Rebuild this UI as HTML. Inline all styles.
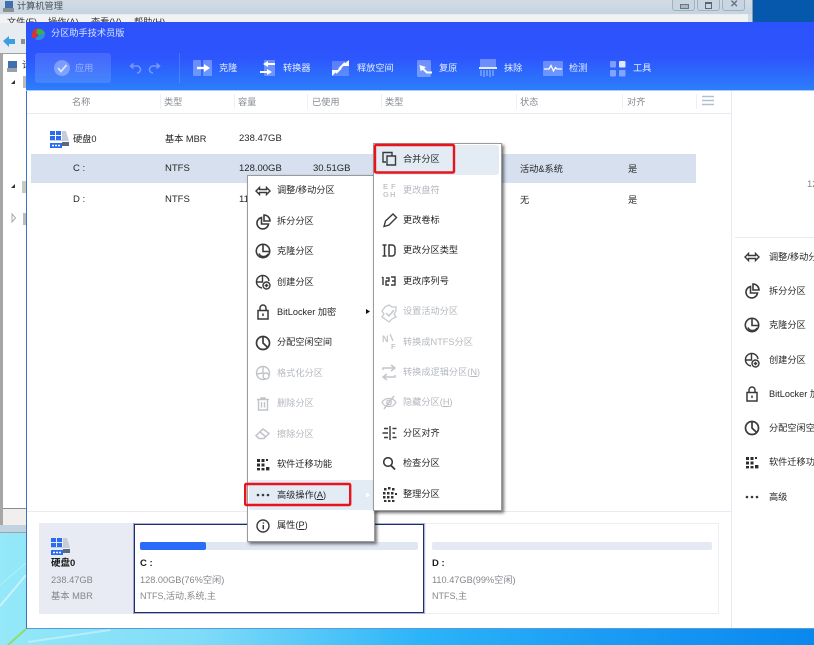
<!DOCTYPE html>
<html lang="zh">
<head>
<meta charset="utf-8">
<style>
html,body{margin:0;padding:0}
body{width:814px;height:645px;overflow:hidden;position:relative;background:#0558ac;font-family:"Liberation Sans","Noto Sans CJK SC",sans-serif;font-size:9.2px;color:#2a2a2a}
#p{position:absolute;left:0;top:0;width:814px;height:645px;overflow:hidden;filter:blur(.3px)}
.a{position:absolute}
.t{position:absolute;white-space:nowrap;line-height:12px;margin-top:-6px}
.h{color:#858a92}
.c{color:#262626}
.d{color:#b4b8be}
.g{color:#85878c}
.w{color:#e6eeff;font-size:9.2px}
.l{font-size:9.5px}
.b{font-weight:bold;color:#1c1c1c}
.m{position:absolute;background:#fff;border:1px solid #9a9a9a;box-shadow:2px 2px 3px rgba(0,0,0,.55);box-sizing:border-box}
</style>
</head>
<body>
<div id="p">
<!-- desktop -->
<div class="a" style="left:0;top:525px;width:814px;height:120px;background:linear-gradient(90deg,#94e8f8 0,#7fdcf8 200px,#2cb4f8 420px,#1b9cf4 600px,#0a88ee 814px)"></div>
<svg class="a" style="left:0;top:533px" width="140" height="112"><path d="M0 73L26 42" stroke="#d4f6fc" stroke-width="2" fill="none" opacity=".8"/><path d="M0 52L26 30" stroke="#c8f4fb" stroke-width="1" fill="none" opacity=".6"/><path d="M8 112L26 96" stroke="#8fdc6c" stroke-width="2"/><path d="M28 109L110 97" stroke="#c8f4fb" stroke-width="2" opacity=".7"/></svg>

<!-- management window behind -->
<div class="a" style="left:0;top:0;width:753px;height:533px;background:#c8d6e4"></div>
<div class="a" style="left:0;top:0;width:753px;height:14px;background:linear-gradient(180deg,#d2dce5,#c5d3e0)"></div>
<div class="a" style="left:0;top:14px;width:748px;height:9px;background:#f1f2f4;border-top:1px solid #e8eef4"></div>
<div class="a" style="left:748px;top:14px;width:5px;height:9px;background:#cfdbe6"></div>
<div class="a" style="left:753px;top:0;width:61px;height:23px;background:#0558ac"></div>
<div class="a" style="left:752px;top:0;width:1px;height:22px;background:#8a97a5"></div>
<div class="a" style="left:672px;top:-1px;width:23px;height:12px;border:1px solid #9fb0c0;border-radius:0 0 3px 3px;background:#c9d5e0;box-sizing:border-box"></div>
<div class="a" style="left:697px;top:-1px;width:23px;height:12px;border:1px solid #9fb0c0;border-radius:0 0 3px 3px;background:#c9d5e0;box-sizing:border-box"></div>
<div class="a" style="left:722px;top:-1px;width:23px;height:12px;border:1px solid #9fb0c0;border-radius:0 0 3px 3px;background:#c9d5e0;box-sizing:border-box"></div>
<div class="a" style="left:680px;top:4px;width:7px;height:3px;border:1px solid #6d7680;background:#aab5c0"></div>
<div class="a" style="left:705px;top:2px;width:5px;height:4px;border:1px solid #5d6670;border-top-width:2px"></div>
<div class="t" style="left:730px;top:5px;font-size:10px;color:#6a7480;font-weight:bold">✕</div>
<div class="t" style="left:17px;top:6px;font-size:9.2px;color:#4a5058">计算机管理</div>
<div class="t" style="left:7px;top:22px;color:#333">文件(F)</div>
<div class="t" style="left:48px;top:22px;color:#333">操作(A)</div>
<div class="t" style="left:91px;top:22px;color:#333">查看(V)</div>
<div class="t" style="left:134px;top:22px;color:#333">帮助(H)</div>
<div class="a" style="left:0;top:23px;width:30px;height:31px;background:#e8ebf0"></div>
<div class="a" style="left:0;top:53px;width:3px;height:480px;background:#a6a6a6"></div>
<div class="a" style="left:3px;top:54px;width:24px;height:454px;background:#fff"></div>
<div class="a" style="left:0;top:53px;width:30px;height:1px;background:#a0a0a0"></div>
<div class="a" style="left:3px;top:508px;width:24px;height:1px;background:#8c8c8c"></div>
<div class="a" style="left:3px;top:509px;width:24px;height:16px;background:#f1eeee"></div>
<div class="a" style="left:0;top:525px;width:27px;height:8px;background:#c3d2df;border-bottom:1px solid #98a4ae;box-sizing:border-box"></div>
<div class="t" style="left:22px;top:65px;color:#333">计</div>

<!-- app window -->
<div class="a" style="left:26px;top:22px;width:788px;height:607px;background:#fff;border-left:1px solid #3c74c4;border-bottom:1px solid #5a9ad8;box-sizing:border-box"></div>
<div class="a" style="left:26px;top:22px;width:788px;height:68px;background:linear-gradient(180deg,#2d52fb 0,#2d55fd 35px,#2c7efb 68px)"></div>
<div class="a" style="left:26px;top:90px;width:788px;height:1px;background:#a9cbfb"></div>
<div class="t" style="left:51px;top:33px;color:#d8e4ff;font-size:9.2px">分区助手技术员版</div>
<div class="a" style="left:35px;top:53px;width:76px;height:30px;border-radius:3px;background:rgba(255,255,255,.12)"></div>
<div class="t" style="left:75px;top:68px;color:rgba(255,255,255,.45);font-size:9.2px">应用</div>
<div class="a" style="left:179px;top:53px;width:1px;height:30px;background:rgba(255,255,255,.15)"></div>
<div class="t w" style="left:219px;top:68px">克隆</div>
<div class="t w" style="left:283px;top:68px">转换器</div>
<div class="t w" style="left:357px;top:68px">释放空间</div>
<div class="t w" style="left:439px;top:68px">复原</div>
<div class="t w" style="left:504px;top:68px">抹除</div>
<div class="t w" style="left:569px;top:68px">检测</div>
<div class="t w" style="left:633px;top:68px">工具</div>

<!-- table -->
<div class="a" style="left:27px;top:113px;width:704px;height:1px;background:#e9ebf2"></div>
<div class="a" style="left:160px;top:94px;width:1px;height:15px;background:#edeff4"></div>
<div class="a" style="left:234px;top:94px;width:1px;height:15px;background:#edeff4"></div>
<div class="a" style="left:307px;top:94px;width:1px;height:15px;background:#edeff4"></div>
<div class="a" style="left:381px;top:94px;width:1px;height:15px;background:#edeff4"></div>
<div class="a" style="left:516px;top:94px;width:1px;height:15px;background:#edeff4"></div>
<div class="a" style="left:622px;top:94px;width:1px;height:15px;background:#edeff4"></div>
<div class="a" style="left:696px;top:94px;width:1px;height:15px;background:#edeff4"></div>
<div class="t h" style="left:72px;top:102px">名称</div>
<div class="t h" style="left:164px;top:102px">类型</div>
<div class="t h" style="left:238px;top:102px">容量</div>
<div class="t h" style="left:312px;top:102px">已使用</div>
<div class="t h" style="left:385px;top:102px">类型</div>
<div class="t h" style="left:520px;top:102px">状态</div>
<div class="t h" style="left:627px;top:102px">对齐</div>
<div class="a" style="left:731px;top:91px;width:1px;height:537px;background:#e6e9f2"></div>
<div class="a" style="left:31px;top:154px;width:665px;height:29px;background:#d6e0ee"></div>
<div class="t c" style="left:73px;top:139px">硬盘0</div>
<div class="t c" style="left:165px;top:139px">基本 MBR</div>
<div class="t c l" style="left:239px;top:139px">238.47GB</div>
<div class="t c l" style="left:73px;top:169px">C :</div>
<div class="t c l" style="left:165px;top:169px">NTFS</div>
<div class="t c l" style="left:239px;top:169px">128.00GB</div>
<div class="t c l" style="left:313px;top:169px">30.51GB</div>
<div class="t c" style="left:520px;top:169px">活动&amp;系统</div>
<div class="t c" style="left:628px;top:169px">是</div>
<div class="t c l" style="left:73px;top:200px">D :</div>
<div class="t c l" style="left:165px;top:200px">NTFS</div>
<div class="t c l" style="left:239px;top:200px">110.47GB</div>
<div class="t c" style="left:520px;top:200px">无</div>
<div class="t c" style="left:628px;top:200px">是</div>

<!-- right panel -->
<div class="t g" style="left:807px;top:185px;font-size:9.5px">128</div>
<div class="a" style="left:735px;top:237px;width:79px;height:1px;background:#e6e9f0"></div>
<div class="t c" style="left:769px;top:257px">调整/移动分区</div>
<div class="t c" style="left:769px;top:291px">拆分分区</div>
<div class="t c" style="left:769px;top:325px">克隆分区</div>
<div class="t c" style="left:769px;top:360px">创建分区</div>
<div class="t c" style="left:769px;top:394px">BitLocker 加密</div>
<div class="t c" style="left:769px;top:428px">分配空闲空间</div>
<div class="t c" style="left:769px;top:462px">软件迁移功能</div>
<div class="t c" style="left:769px;top:497px">高级</div>

<!-- bottom -->
<div class="a" style="left:27px;top:511px;width:704px;height:1px;background:#e9ebf2"></div>
<div class="a" style="left:39px;top:523px;width:96px;height:91px;background:#e8ebf3"></div>
<div class="t b" style="left:51px;top:564px;font-size:9.5px">硬盘0</div>
<div class="t g" style="left:51px;top:580px;font-size:9.3px">238.47GB</div>
<div class="t g" style="left:51px;top:596px;font-size:9.3px">基本 MBR</div>
<div class="a" style="left:134px;top:524px;width:290px;height:89px;border:1px solid #1d2d70;outline:1px solid rgba(29,45,112,.35);box-sizing:border-box;background:#fff"></div>
<div class="a" style="left:140px;top:542px;width:278px;height:8px;border-radius:2px;background:#e1e7f2"></div>
<div class="a" style="left:140px;top:542px;width:66px;height:8px;border-radius:2px;background:#2a6cf8"></div>
<div class="t b" style="left:140px;top:564px;font-size:9.5px">C :</div>
<div class="t g" style="left:140px;top:580px;font-size:9.2px">128.00GB(76%空闲)</div>
<div class="t g" style="left:140px;top:596px;font-size:9px">NTFS,活动,系统,主</div>
<div class="a" style="left:425px;top:523px;width:294px;height:91px;border:1px solid #eceef5;box-sizing:border-box;background:#fff"></div>
<div class="a" style="left:432px;top:542px;width:280px;height:8px;border-radius:2px;background:#e4e9f3"></div>
<div class="t b" style="left:432px;top:564px;font-size:9.5px">D :</div>
<div class="t g" style="left:432px;top:580px;font-size:9.2px">110.47GB(99%空闲)</div>
<div class="t g" style="left:432px;top:596px;font-size:9px">NTFS,主</div>

<!-- menu 1 -->
<div class="m" style="left:247px;top:175px;width:128px;height:367px"></div>
<div class="a" style="left:249px;top:480px;width:125px;height:30px;background:#e3ebf5;border-radius:3px"></div>
<div class="t c" style="left:277px;top:190px">调整/移动分区</div>
<div class="t c" style="left:277px;top:221px">拆分分区</div>
<div class="t c" style="left:277px;top:251px">克隆分区</div>
<div class="t c" style="left:277px;top:282px">创建分区</div>
<div class="t c" style="left:277px;top:312px">BitLocker 加密</div>
<div class="t c" style="left:277px;top:342px">分配空闲空间</div>
<div class="t d" style="left:277px;top:373px">格式化分区</div>
<div class="t d" style="left:277px;top:403px">删除分区</div>
<div class="t d" style="left:277px;top:434px">擦除分区</div>
<div class="t c" style="left:277px;top:464px">软件迁移功能</div>
<div class="t c" style="left:277px;top:495px">高级操作(<u>A</u>)</div>
<div class="t c" style="left:277px;top:525px">属性(<u>P</u>)</div>

<!-- menu 2 -->
<div class="m" style="left:373px;top:143px;width:129px;height:368px"></div>
<div class="a" style="left:376px;top:145px;width:123px;height:30px;background:#e3ebf5;border-radius:3px"></div>
<div class="t c" style="left:403px;top:159px">合并分区</div>
<div class="t d" style="left:403px;top:190px">更改盘符</div>
<div class="t c" style="left:403px;top:220px">更改卷标</div>
<div class="t c" style="left:403px;top:250px">更改分区类型</div>
<div class="t c" style="left:403px;top:281px">更改序列号</div>
<div class="t d" style="left:403px;top:311px">设置活动分区</div>
<div class="t d" style="left:403px;top:342px">转换成NTFS分区</div>
<div class="t d" style="left:403px;top:372px">转换成逻辑分区(<u>N</u>)</div>
<div class="t d" style="left:403px;top:402px">隐藏分区(<u>H</u>)</div>
<div class="t c" style="left:403px;top:433px">分区对齐</div>
<div class="t c" style="left:403px;top:463px">检查分区</div>
<div class="t c" style="left:403px;top:494px">整理分区</div>

<!-- icons overlay -->
<svg class="a" style="left:0;top:0" width="814" height="645" viewBox="0 0 814 645">
<defs>
<g id="i-resize" fill="none" stroke="#3a3a3a" stroke-width="1.4"><path d="M-7 0L-3.5-3.5V-1.5H3.5V-3.5L7 0L3.5 3.5V1.5H-3.5V3.5Z"/></g>
<g id="i-split" fill="none" stroke="#3a3a3a" stroke-width="1.6"><path d="M-1.5-4.5A5.8 5.8 0 1 0 5.5 2H-1.5Z"/><path d="M1-7A6 6 0 0 1 7-1H1Z"/></g>
<g id="i-clone" fill="none" stroke="#3a3a3a" stroke-width="1.6"><circle r="6.7"/><path d="M0-6.5V0.5H6.5M-4 2.5A5 5 0 0 0 5 3"/></g>
<g id="i-create" fill="none" stroke="#3a3a3a" stroke-width="1.4"><path d="M-1 6A6.3 6.3 0 1 1 6-1"/><path d="M-.5-6V0H-6"/><circle cx="3.5" cy="3.5" r="3.5" fill="#fff"/><path d="M1.7 3.5H5.3M3.5 1.7V5.3"/></g>
<g id="i-lock" fill="none" stroke="#3a3a3a" stroke-width="1.5"><rect x="-5" y="-1.5" width="10" height="8.5"/><path d="M-3-1.5V-4A3 3 0 0 1 3-4V-1.5"/><path d="M0 1.5V4"/></g>
<g id="i-alloc" fill="none" stroke="#3a3a3a" stroke-width="1.7"><circle r="6.5"/><path d="M0-6.5V0L4.7 4.5"/></g>
<g id="i-format" fill="none" stroke="#c0c3c8" stroke-width="1.4"><circle r="6.5"/><path d="M0-6.5V0L5 4M0 0L-6 1"/><circle cx="3" cy="3" r="3" fill="#fff"/></g>
<g id="i-del" fill="none" stroke="#c0c3c8" stroke-width="1.4"><path d="M-6-4.5H6M-2-4.5V-6H2V-4.5M-4.5-4.5V6H4.5V-4.5M-1.5-2V3.5M1.5-2V3.5"/></g>
<g id="i-wipe" fill="none" stroke="#c0c3c8" stroke-width="1.5"><path d="M-7 1.5L0-5L6-.5L1 4.5H-4Z"/><path d="M-3-2L3 3"/></g>
<g id="i-apps" fill="#2c2c2c"><rect x="-6" y="-5" width="3" height="3"/><rect x="-1.5" y="-5" width="3" height="3"/><rect x="-6" y="-.5" width="3" height="3"/><rect x="-1.5" y="-.5" width="3" height="3"/><rect x="-6" y="4" width="3" height="2.4"/><rect x="-1.5" y="4" width="3" height="2.4"/><rect x="3" y="3" width="3.4" height="3.4"/><rect x="3" y="-5" width="2" height="2"/></g>
<g id="i-dots" fill="#3a3a3a"><circle cx="-5" r="1.3"/><circle r="1.3"/><circle cx="5" r="1.3"/></g>
<g id="i-info" fill="none" stroke="#3a3a3a" stroke-width="1.4"><circle r="6"/><path d="M.3-1V3.3" stroke-width="1.5"/><path d="M.4-3.6V-2.4" stroke-width="1.5"/></g>
</defs>

<!-- management window small icons -->
<rect x="5" y="1" width="8" height="7" fill="#3f6fae"/><rect x="3" y="8" width="11" height="4" fill="#8a9096"/>
<path d="M3 41L9 36V39H15V44H9V47Z" fill="#3a9ee0"/>
<rect x="21" y="39" width="4" height="5" fill="#8d8f92"/>
<rect x="8" y="61" width="9" height="7" fill="#3f6fae"/><rect x="7" y="68" width="10" height="4" fill="#9aa0a6"/>
<path d="M15 80V84H11Z" fill="#333"/>
<rect x="23" y="76" width="3" height="12" fill="#bbb"/>
<path d="M15 184V188H11Z" fill="#333"/>
<rect x="22" y="181" width="4" height="12" fill="#c4ccc4"/>
<path d="M12 214L15.500 218L12 222Z" fill="none" stroke="#aaa"/>
<rect x="23" y="213" width="3" height="12" fill="#b8bec4"/>

<!-- app logo -->
<path d="M32 34A6 6 0 0 1 42 30L38 34L36 38H32Z" fill="#d8322e"/>
<path d="M37 29A7 7 0 0 1 45 33L40 36L36 33Z" fill="#3cae4a"/>
<path d="M45 33A6.500 6.500 0 0 1 35 39L39 35Z" fill="#2c8fdc"/>

<!-- toolbar icons -->
<circle cx="62" cy="68" r="8" fill="rgba(255,255,255,.3)"/>
<path d="M58 68L61 71.500L66.500 65" fill="none" stroke="rgba(255,255,255,.7)" stroke-width="1.8"/>
<path d="M131 66H137A3.500 3.500 0 0 1 137 73M133.500 63.500L130.500 66L133.500 68.500" fill="none" stroke="rgba(255,255,255,.35)" stroke-width="1.5"/>
<path d="M159 66H153A3.500 3.500 0 0 0 153 73M156.500 63.500L159.500 66L156.500 68.500" fill="none" stroke="rgba(255,255,255,.35)" stroke-width="1.5"/>

<rect x="193" y="60" width="8" height="16" rx="1" fill="rgba(255,255,255,.3)"/><rect x="203" y="60" width="9" height="16" rx="1" fill="rgba(255,255,255,.3)"/>
<path d="M197 68H205" stroke="#fff" stroke-width="2.4"/><path d="M204 64L210 68L204 72Z" fill="#fff"/>

<rect x="264" y="60" width="11" height="16" rx="1" fill="rgba(255,255,255,.3)"/>
<path d="M267 64H275" stroke="#fff" stroke-width="2"/><path d="M268 61L263 64L268 67Z" fill="#fff"/>
<path d="M260 72H268" stroke="#fff" stroke-width="2"/><path d="M267 69L272 72L267 75Z" fill="#fff"/>

<rect x="332" y="61" width="17" height="15" fill="rgba(255,255,255,.22)"/>
<path d="M342 66L349 60V66ZM338 70L332 76V70Z" fill="#fff"/><path d="M339 69L345 63M336 73L341 68" stroke="#fff" stroke-width="2"/>

<rect x="417" y="60" width="14" height="17" rx="1.500" fill="rgba(255,255,255,.32)"/>
<path d="M420 65V71H421L426 68Z" fill="#fff" transform="rotate(-10 420 68)"/><path d="M421 67L427 72.500H432" fill="none" stroke="#fff" stroke-width="2"/>

<rect x="480" y="59" width="16" height="8" fill="rgba(255,255,255,.3)"/>
<path d="M479 68H497" stroke="#fff" stroke-width="1.800"/>
<path d="M481 70V76M484 70V77M487 70V76M490 70V77M493 70V76" stroke="rgba(255,255,255,.45)" stroke-width="1.300"/>

<rect x="543" y="61" width="20" height="15" rx="1" fill="rgba(255,255,255,.3)"/>
<path d="M544 69H549L551 65.500L553.500 71L555.500 67.500L557 69H562" fill="none" stroke="#fff" stroke-width="1.300"/>

<rect x="610" y="61" width="6" height="6.500" rx="1" fill="rgba(255,255,255,.4)"/>
<rect x="619" y="61" width="6.500" height="6.500" rx="1" fill="rgba(255,255,255,.85)"/>
<rect x="610" y="70" width="6" height="6.500" rx="1" fill="rgba(255,255,255,.4)"/>
<rect x="619" y="70" width="6.500" height="6.500" rx="1" fill="rgba(255,255,255,.4)"/>

<!-- header columns icon -->
<path d="M702 96.500H714M702 100.500H714M702 104.500H714" stroke="#b2bfd0" stroke-width="1.600"/>

<!-- disk icon in table -->
<g id="disk">
<rect x="50" y="131" width="5" height="4" fill="#2a6cf0"/><rect x="56" y="131" width="5" height="4" fill="#2a6cf0"/>
<rect x="50" y="136" width="5" height="4" fill="#2a6cf0"/><rect x="56" y="136" width="5" height="4" fill="#2a6cf0"/>
<path d="M62 131L66 131L69 141H50V140H62Z" fill="#c6cdd8"/>
<rect x="50" y="143" width="12" height="5" fill="#2a6cf0"/>
<rect x="62" y="142" width="7" height="4" fill="#5c6a7d"/>
<path d="M52 145.500H60" stroke="#fff" stroke-width="1.500" stroke-dasharray="2 1"/>
</g>
<use href="#disk" x="1" y="407"/>

<!-- menu 1 icons -->
<use href="#i-resize" x="263" y="191"/>
<use href="#i-split" x="263" y="222"/>
<use href="#i-clone" x="263" y="251"/>
<use href="#i-create" x="263" y="282"/>
<use href="#i-lock" x="263" y="312"/>
<use href="#i-alloc" x="263" y="343"/>
<use href="#i-format" x="263" y="373"/>
<use href="#i-del" x="263" y="404"/>
<use href="#i-wipe" x="263" y="434"/>
<use href="#i-apps" x="263" y="464"/>
<use href="#i-dots" x="263" y="495"/>
<use href="#i-info" x="263" y="526"/>
<path d="M366 309L370 311.500L366 314Z" fill="#111"/>
<path d="M366 492.500L370 495L366 497.500Z" fill="#fff"/>

<!-- menu 2 icons -->
<g fill="none" stroke="#3a3a3a" stroke-width="1.400">
<path d="M386 162H383V152.500H392V156M387 156H395.500V165H387Z"/>
<path d="M384 226.500L385.500 221L393 214L396.500 217.500L389 225Z"/>
<path d="M384.500 245V256M382.500 245H386.500M382.500 256H386.500M389 245H392A3 3 0 0 1 395 248V253A3 3 0 0 1 392 256H389Z" stroke-width="1.500"/>
<path d="M383 277V285M382 278L383 277M386 278H389V281H386V285H389M391 277H395V285H391M392 281H395"/>
<path d="M384 428.500H388M382.500 433H388M384 437.500H388M390 426V440M392.500 428.500H396.500M392.500 433H395M392.500 437.500H396.500"/>
<circle cx="388" cy="462" r="4.300" stroke-width="1.600"/><path d="M391 465.500L395 469.500" stroke-width="1.900"/>
</g>
<g fill="#333">
<rect x="384" y="488" width="2.500" height="2.500"/><rect x="388" y="487" width="2.500" height="2.500"/><rect x="392" y="488" width="2.500" height="2.500"/>
<rect x="383" y="492" width="2.500" height="2.500"/><rect x="387" y="492" width="2.500" height="2.500"/><rect x="391" y="492" width="2.500" height="2.500"/><rect x="395" y="493" width="2" height="2"/>
<rect x="383" y="496" width="2.500" height="2.500"/><rect x="387" y="496" width="2.500" height="2.500"/><rect x="391" y="496" width="2.500" height="2.500"/>
<rect x="384" y="500" width="2.500" height="2"/><rect x="388" y="500" width="2.500" height="2"/><rect x="392" y="500" width="2.500" height="2"/>
</g>
<g font-family="Liberation Sans" font-size="7.500" font-weight="bold" fill="#c3c6cb">
<text x="383" y="189">E</text><text x="391" y="189">F</text>
<text x="383" y="197">G</text><text x="390" y="197">H</text>
</g>
<g font-family="Liberation Sans" font-weight="bold" fill="#c3c6cb">
<text x="382" y="342" font-size="9">N</text><text x="391" y="349" font-size="7.500">F</text>
</g>
<g fill="none" stroke="#c3c6cb" stroke-width="1.300">
<path d="M390 334L393 341" />
<path d="M389 305L392 307L396 307V311L394 314L396 317L392 319L389 322L385 319L382 317L384 314L382 311L385 307Z" stroke-width="1.200"/>
<path d="M386 313L389 316L394 310" stroke-width="1.400"/>
<path d="M383 370V368H394M391 365L395 368L391 371M395 375V377H384M387 374L383 377L387 380" stroke-width="1.500"/>
<path d="M382 402.500C385 397 393 397 396 402.500C393 408 385 408 382 402.500Z"/><circle cx="389" cy="402.500" r="2.300"/><path d="M384 409L394 396" stroke-width="1.500"/>
</g>

<!-- right panel icons -->
<use href="#i-resize" x="752" y="257"/>
<use href="#i-split" x="752" y="291"/>
<use href="#i-clone" x="752" y="325"/>
<use href="#i-create" x="752" y="360"/>
<use href="#i-lock" x="752" y="394"/>
<use href="#i-alloc" x="752" y="428"/>
<use href="#i-apps" x="752" y="462"/>
<use href="#i-dots" x="752" y="497"/>

<!-- red highlights -->
<rect x="375" y="145" width="79" height="27.500" rx="1" fill="none" stroke="#e8141c" stroke-width="2.400"/>
<rect x="245.200" y="484" width="105" height="21" rx="1" fill="none" stroke="#e8141c" stroke-width="2.400"/>
</svg>
</div>
</body>
</html>
